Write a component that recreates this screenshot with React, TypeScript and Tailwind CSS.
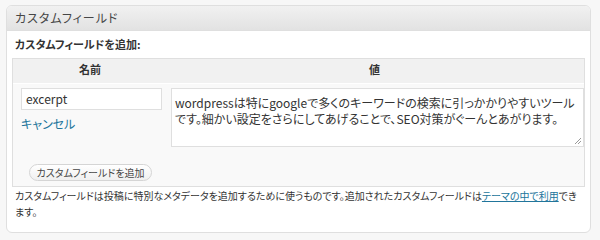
import React from 'react';

const jp = "font-['Noto_Sans_CJK_JP','Noto_Sans',sans-serif] [font-feature-settings:'palt']";

export default function App() {
  return (
    <div className={`w-[600px] h-[240px] bg-[#f7f7f7] pt-[5px] pl-[6px] ${jp} text-[#333]`}>
      <div className="w-[585px] h-[228px] rounded-[6px] border border-[#dfdfdf] bg-white overflow-hidden">
        {/* Panel header */}
        <div className="h-[25px] flex items-center px-[8px] border-b border-[#dfdfdf] bg-gradient-to-b from-[#f1f1f1] to-[#e2e2e2] text-[12px] tracking-[1px] text-[#464646]">
          カスタムフィールド
        </div>

        <div className="px-[5px]">
          <div className="h-[27px] flex items-center pl-[3px] text-[11px] font-bold text-[#333]">
            カスタムフィールドを追加:
          </div>

          {/* Table */}
          <div className="w-[573px] border border-[#dfdfdf] bg-[#f9f9f9]">
            <div className="grid grid-cols-[154px_1fr] h-[25px] items-center pb-[3px] bg-[#f1f1f1] border-b border-white text-[11px] font-bold text-[#333]">
              <div className="text-center">名前</div>
              <div className="text-center pr-[2px]">値</div>
            </div>
            <div className="grid grid-cols-[158px_1fr] pt-[4px] pb-[5px]">
              <div className="pl-[8px]">
                <div className="w-[141px] h-[22px] border border-[#dfdfdf] bg-white flex items-center px-[4px] text-[12px] text-[#333]">
                  excerpt
                </div>
                <a href="#cancel" className="block mt-[5px] h-[18px] leading-[18px] text-[12px] text-[#21759b]">キャンセル</a>
                <button className="mt-[31px] ml-[8px] h-[17px] w-[123px] rounded-full border border-[#d5d5d5] bg-gradient-to-b from-[#ffffff] to-[#f0f0f0] text-[10px] text-[#464646] flex items-center justify-center">
                  カスタムフィールドを追加
                </button>
              </div>
              <div className="relative w-[413px] h-[59px] border border-[#dfdfdf] bg-white px-[3px] pt-[6px] text-[12px] leading-[16px] text-[#333]">
                wordpressは特にgoogleで多くのキーワードの検索に引っかかりやすいツールです。細かい設定をさらにしてあげることで、SEO対策がぐーんとあがります。
                <svg className="absolute right-[1px] bottom-[1px]" width="9" height="9" viewBox="0 0 9 9">
                  <path d="M8 2 L2 8 M8 5 L5 8" stroke="#999" strokeWidth="1" fill="none" />
                </svg>
              </div>
            </div>
          </div>

          <p className="pl-[3px] pt-[1px] text-[10px] leading-[16px] text-[#333]">
            カスタムフィールドは投稿に特別なメタデータを追加するために使うものです。追加されたカスタムフィールドは
            <a href="#theme" className="text-[#21759b] underline">テーマの中で利用</a>
            できます。
          </p>
        </div>
      </div>
    </div>
  );
}
